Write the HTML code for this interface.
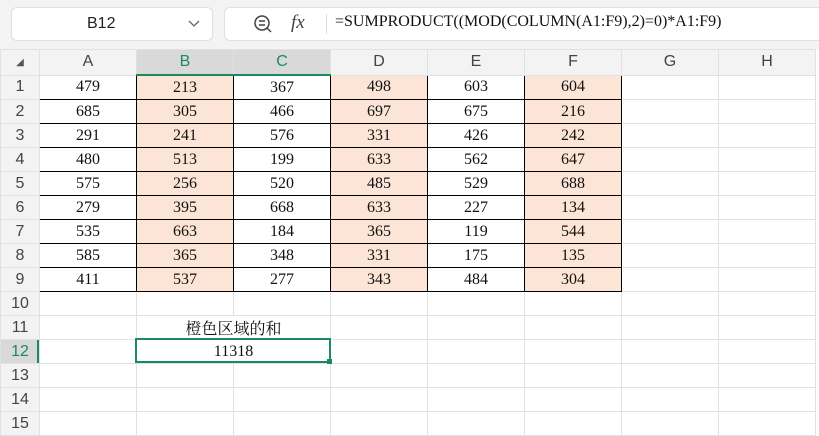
<!DOCTYPE html>
<html><head><meta charset="utf-8"><style>
body{margin:0;width:819px;height:415px;overflow:hidden;background:#fff;position:relative;font-family:"Liberation Serif","Noto Serif CJK SC",serif;}
.top{position:absolute;left:0;top:0;width:819px;height:49px;background:#f3f3f3;}
.nb{position:absolute;left:11px;top:7px;width:200px;height:32px;background:#fff;border:1px solid #e0e0e0;border-radius:6px;font:16px "Liberation Sans",sans-serif;color:#222;}
.fb{position:absolute;left:224px;top:7px;width:600px;height:32px;background:#fff;border:1px solid #e0e0e0;border-radius:6px;}
table{position:absolute;left:0;top:49px;border-collapse:collapse;table-layout:fixed;}
td{height:23px;padding:0;border:1px solid #e1e1e1;text-align:center;font-size:16px;color:#111;overflow:hidden;white-space:nowrap;}
tr.h td{height:24px;font:16px "Liberation Sans",sans-serif;color:#444;background:#f3f3f3;border-color:#e1e1e1;}
td.r{background:#f3f3f3;font:16px "Liberation Sans",sans-serif;color:#444;}
td.d{border-color:#000;}
td.o{background:#fce4d6;}
</style></head><body>
<div class="top"></div>
<div class="nb"><span style="position:absolute;left:75px;top:7px">B12</span>
<svg style="position:absolute;left:176px;top:12px" width="12" height="8"><path d="M1 1 L6 6 L11 1" fill="none" stroke="#666" stroke-width="1.3"/></svg></div>
<div class="fb">
<svg style="position:absolute;left:28px;top:6px" width="20" height="20"><circle cx="9" cy="9" r="7" fill="none" stroke="#444" stroke-width="1.5"/><path d="M6 7h6M6 11h6M14 14l4 4" stroke="#444" stroke-width="1.5"/></svg>
<span style="position:absolute;left:66px;top:4px;font:italic 19px 'Liberation Serif',serif;color:#444">fx</span>
<div style="position:absolute;left:101px;top:6px;width:1px;height:20px;background:#ddd"></div>
<span style="position:absolute;left:110px;top:5px;font-size:16px;color:#111">=SUMPRODUCT((MOD(COLUMN(A1:F9),2)=0)*A1:F9)</span>
</div>
<table>
<colgroup><col style="width:39px"><col style="width:97px"><col style="width:97px"><col style="width:97px"><col style="width:97px"><col style="width:97px"><col style="width:97px"><col style="width:97px"><col style="width:97px"></colgroup>
<tr class="h"><td style="font-size:10px;color:#555">◢</td><td>A</td><td style="background:#d9d9d9;color:#1a8a60;border-bottom:2px solid #1a8a60">B</td><td style="background:#d9d9d9;color:#1a8a60;border-bottom:2px solid #1a8a60">C</td><td>D</td><td>E</td><td>F</td><td>G</td><td>H</td></tr>
<tr><td class="r">1</td><td class="d">479</td><td class="d o">213</td><td class="d">367</td><td class="d o">498</td><td class="d">603</td><td class="d o">604</td><td></td><td></td></tr>
<tr><td class="r">2</td><td class="d">685</td><td class="d o">305</td><td class="d">466</td><td class="d o">697</td><td class="d">675</td><td class="d o">216</td><td></td><td></td></tr>
<tr><td class="r">3</td><td class="d">291</td><td class="d o">241</td><td class="d">576</td><td class="d o">331</td><td class="d">426</td><td class="d o">242</td><td></td><td></td></tr>
<tr><td class="r">4</td><td class="d">480</td><td class="d o">513</td><td class="d">199</td><td class="d o">633</td><td class="d">562</td><td class="d o">647</td><td></td><td></td></tr>
<tr><td class="r">5</td><td class="d">575</td><td class="d o">256</td><td class="d">520</td><td class="d o">485</td><td class="d">529</td><td class="d o">688</td><td></td><td></td></tr>
<tr><td class="r">6</td><td class="d">279</td><td class="d o">395</td><td class="d">668</td><td class="d o">633</td><td class="d">227</td><td class="d o">134</td><td></td><td></td></tr>
<tr><td class="r">7</td><td class="d">535</td><td class="d o">663</td><td class="d">184</td><td class="d o">365</td><td class="d">119</td><td class="d o">544</td><td></td><td></td></tr>
<tr><td class="r">8</td><td class="d">585</td><td class="d o">365</td><td class="d">348</td><td class="d o">331</td><td class="d">175</td><td class="d o">135</td><td></td><td></td></tr>
<tr><td class="r">9</td><td class="d">411</td><td class="d o">537</td><td class="d">277</td><td class="d o">343</td><td class="d">484</td><td class="d o">304</td><td></td><td></td></tr>
<tr><td class="r">10</td><td></td><td></td><td></td><td></td><td></td><td></td><td></td><td></td></tr>
<tr><td class="r">11</td><td></td><td colspan="2">橙色区域的和</td><td></td><td></td><td></td><td></td><td></td></tr>
<tr><td class="r" style="background:#d9d9d9;color:#1a8a60;box-shadow:inset -2px 0 #1a8a60">12</td><td></td><td colspan="2">11318</td><td></td><td></td><td></td><td></td><td></td></tr>
<tr><td class="r">13</td><td></td><td></td><td></td><td></td><td></td><td></td><td></td><td></td></tr>
<tr><td class="r">14</td><td></td><td></td><td></td><td></td><td></td><td></td><td></td><td></td></tr>
<tr><td class="r">15</td><td></td><td></td><td></td><td></td><td></td><td></td><td></td><td></td></tr>
</table>
<div style="position:absolute;left:135px;top:338px;width:192px;height:21px;border:2px solid #1a8a60"></div>
<div style="position:absolute;left:327px;top:359px;width:5px;height:5px;background:#1a8a60"></div>
</body></html>
